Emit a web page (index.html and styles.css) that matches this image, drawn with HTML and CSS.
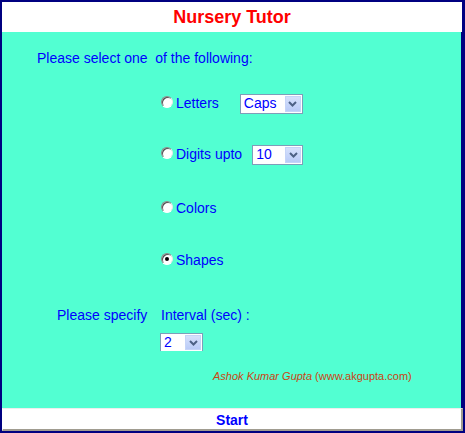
FILE: index.html
```html
<!DOCTYPE html>
<html>
<head>
<meta charset="utf-8">
<title>Nursery Tutor</title>
<link rel="stylesheet" href="styles.css">
</head>
<body>
<div class="frame">
  <header class="title">Nursery Tutor</header>
  <main class="panel">
    <p class="intro">Please select one &nbsp;of the following:</p>
    <div class="options">
      <div class="opt opt-letters">
        <span class="radio"></span><span class="opt-text">Letters</span>
        <span class="select sel-caps"><span class="sel-value">Caps</span><span class="sel-arrow"><svg width="9" height="6" viewBox="0 0 9 6"><path d="M1 1 L4.5 4.5 L8 1" fill="none" stroke="#4d6185" stroke-width="2"/></svg></span></span>
      </div>
      <div class="opt opt-digits">
        <span class="radio"></span><span class="opt-text">Digits upto</span>
        <span class="select sel-digits"><span class="sel-value">10</span><span class="sel-arrow"><svg width="9" height="6" viewBox="0 0 9 6"><path d="M1 1 L4.5 4.5 L8 1" fill="none" stroke="#4d6185" stroke-width="2"/></svg></span></span>
      </div>
      <div class="opt opt-colors">
        <span class="radio"></span><span class="opt-text">Colors</span>
      </div>
      <div class="opt opt-shapes">
        <span class="radio checked"></span><span class="opt-text">Shapes</span>
      </div>
    </div>
    <div class="specify"><span class="specify-label">Please specify</span><span>Interval (sec) :</span></div>
    <div class="select sel-interval"><span class="sel-value">2</span><span class="sel-arrow"><svg width="9" height="6" viewBox="0 0 9 6"><path d="M1 1 L4.5 4.5 L8 1" fill="none" stroke="#4d6185" stroke-width="2"/></svg></span></div>
    <p class="author"><i>Ashok Kumar Gupta</i> (www.akgupta.com)</p>
  </main>
  <button class="start">Start</button>
</div>
</body>
</html>
```

FILE: styles.css
```css
* { box-sizing: border-box; }
html, body { margin: 0; padding: 0; }
body {
  font-family: "Liberation Sans", Arial, sans-serif;
  background: #000080;
}
.frame {
  width: 465px;
  height: 433px;
  border: 2px solid #000080;
  background: #000080;
  display: flex;
  flex-direction: column;
}
.title {
  height: 30px;
  margin-right: 1px;
  background: #ffffff;
  color: #ff0000;
  font-weight: bold;
  font-size: 18px;
  line-height: 30px;
  text-align: center;
}
.panel {
  flex: 1;
  margin-right: 2px;
  background: #52ffd2;
  color: #0000ff;
  font-size: 14px;
  line-height: 16px;
  padding: 18px 0 0 35px;
}
.intro { margin: 0; }
.options { margin-left: 124px; }
.opt {
  display: flex;
  align-items: baseline;
}
.opt-letters { margin-top: 28px; }
.opt-digits { margin-top: 31px; }
.opt-colors { margin-top: 35px; }
.opt-shapes { margin-top: 36px; }
.radio {
  display: inline-block;
  position: relative;
  width: 12px;
  height: 12px;
  border-radius: 50%;
  background: #ffffff;
  border: 1px solid;
  border-color: #8a8a8a #e8e8e8 #ffffff #8a8a8a;
  box-shadow: inset 1px 1px 0 #505050;
  margin-right: 3px;
}
.radio.checked::after {
  content: "";
  position: absolute;
  left: 3px;
  top: 3px;
  width: 4px;
  height: 4px;
  border-radius: 50%;
  background: #000000;
}
.select {
  display: inline-flex;
  height: 20px;
  border: 1px solid #7f9db9;
  background: #ffffff;
  color: #0000ff;
}
.sel-value {
  flex: 1;
  font-size: 14px;
  line-height: 16px;
  padding-left: 3px;
}
.sel-arrow {
  width: 16px;
  margin: 1px;
  display: flex;
  align-items: center;
  justify-content: center;
  background: linear-gradient(#d6e1fc, #b9cbf7);
  border: 1px solid #c5d4f8;
}
.sel-caps { width: 63px; margin-left: 21px; }
.sel-digits { width: 51px; margin-left: 10px; }
.specify {
  display: flex;
  margin-top: 39px;
}
.specify-label {
  width: 104px;
  margin-left: 20px;
}
.sel-interval {
  display: flex;
  width: 43px;
  height: 18px;
  border-bottom: none;
  margin-top: 10px;
  margin-left: 123px;
}
.author {
  margin: 19px 0 0 176px;
  font-size: 11px;
  line-height: 13px;
  color: #cc4411;
}
.start {
  display: block;
  width: 100%;
  height: 23px;
  margin: 0;
  padding: 2px 0 0 0;
  background: #ffffff;
  border: none;
  border-top: 1px solid #eeeeee;
  border-left: 1px solid #ffffff;
  border-bottom: 2px solid #a09c90;
  border-right: 2px solid #a09c90;
  color: #0000ff;
  font-family: "Liberation Sans", Arial, sans-serif;
  font-weight: bold;
  font-size: 14px;
  line-height: 18px;
  text-align: center;
}
```
